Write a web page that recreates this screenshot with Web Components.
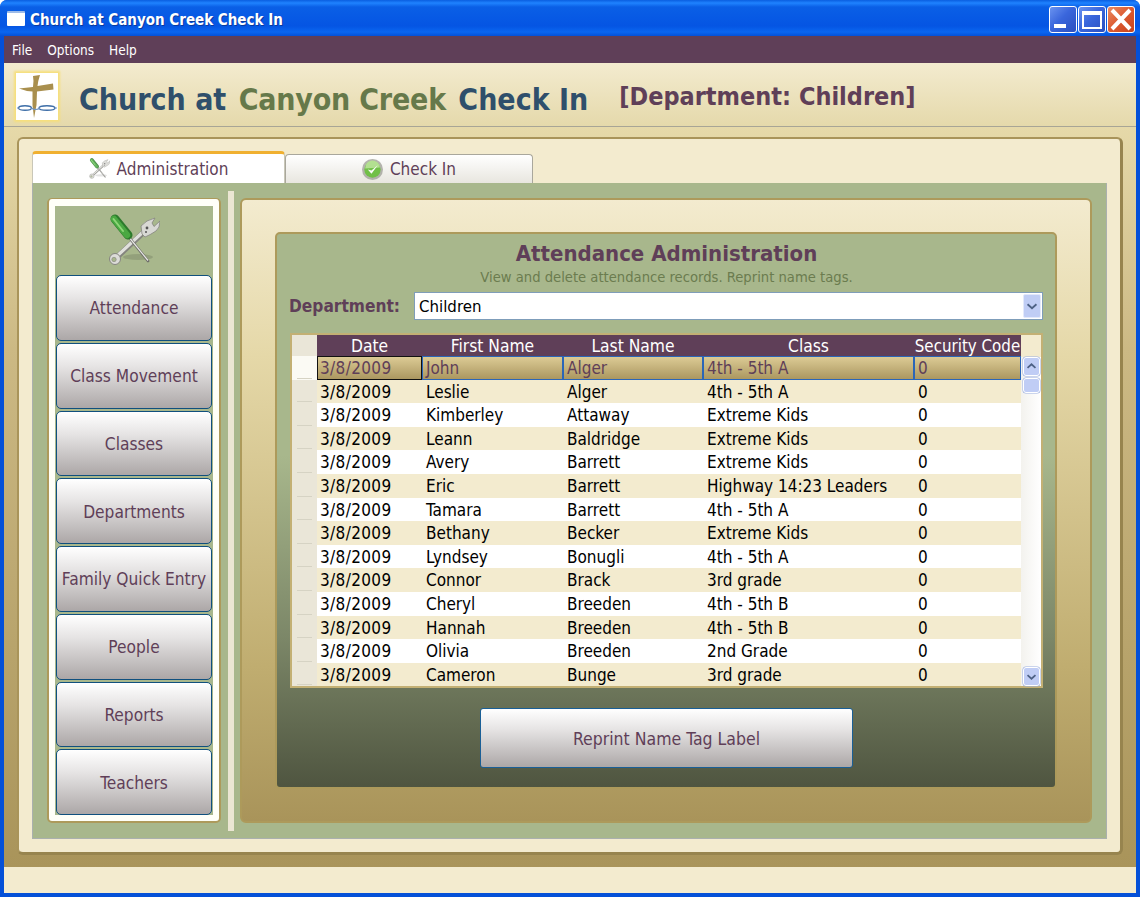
<!DOCTYPE html>
<html>
<head>
<meta charset="utf-8">
<title>Church at Canyon Creek Check In</title>
<style>
html, body { margin: 0; padding: 0; height: 100%; overflow: hidden; }
body { font-family: "DejaVu Sans", "Liberation Sans", sans-serif; font-stretch: condensed; }
</style>
</head>
<body>
<app-window></app-window>
<script>
// Barre de titre facon Windows XP
class TitleBar extends HTMLElement {
    connectedCallback() {
        this.attachShadow({ mode: 'open' });
        this.shadowRoot.innerHTML = `
            <style>
                :host {
                    display: flex;
                    flex: none;
                    align-items: center;
                    height: 36px;
                    padding: 0 5px 0 7px;
                    box-sizing: border-box;
                    color: #fff;
                    background: linear-gradient(#0a5ee0 0, #1f83ff 3px, #0a5fe6 7px, #0555e3 26px, #0a66f0 32px, #0450d8 36px);
                    border-radius: 7px 7px 0 0;
                    font-size: 15px;
                    font-weight: bold;
                    text-shadow: 1px 1px 0 #0a3a9e;
                }
                .icon { width: 18px; height: 15px; margin: 1px 5px 0 0; background: #fff; border-top: 2px solid #9dbbe8; box-sizing: border-box; border-radius: 1px; }
                .text { flex: 1; margin-top: 4px; }
                .btns { display: flex; gap: 1px; margin-top: 2px; }
                .btn { width: 28px; height: 27px; box-sizing: border-box; border: 1px solid #fff; border-radius: 3px; background: linear-gradient(135deg, #6a93f0, #3a66dc 45%, #2a4fc0); display: flex; }
                .close { background: linear-gradient(135deg, #ea8a62, #dc5a30 50%, #c8431c); }
                svg { width: 100%; height: 100%; }
            </style>
            <div class="icon"></div>
            <div class="text"><slot></slot></div>
            <div class="btns">
                <div class="btn"><svg viewBox="0 0 26 25"><rect x="4" y="17" width="12" height="4" fill="#fff"/></svg></div>
                <div class="btn"><svg viewBox="0 0 26 25"><path d="M3 4h20v18H3z M5 8v12h16V8z" fill="#fff" fill-rule="evenodd"/></svg></div>
                <div class="btn close"><svg viewBox="0 0 26 25"><path d="M4 3l18 19M22 3L4 22" stroke="#fff" stroke-width="4" fill="none"/></svg></div>
            </div>
        `;
    }
}
customElements.define('title-bar', TitleBar);

class MenuBar extends HTMLElement {
    connectedCallback() {
        this.attachShadow({ mode: 'open' });
        this.shadowRoot.innerHTML = `
            <style>
                :host {
                    display: flex;
                    flex: none;
                    align-items: center;
                    gap: 15px;
                    height: 27px;
                    box-sizing: border-box;
                    padding: 1px 8px 0;
                    background: #5f3f58;
                    color: #fff;
                    font-size: 13.5px;
                }
            </style>
            <span>File</span><span>Options</span><span>Help</span>
        `;
    }
}
customElements.define('menu-bar', MenuBar);

class AppHeader extends HTMLElement {
    connectedCallback() {
        this.attachShadow({ mode: 'open' });
        this.shadowRoot.innerHTML = `
            <style>
                :host {
                    display: flex;
                    flex: none;
                    align-items: center;
                    height: 64px;
                    box-sizing: border-box;
                    padding: 0 0 0 12px;
                    background: linear-gradient(#f3ebcf, #e5d9ab);
                    border-bottom: 1px solid #a8a596;
                }
                .logo { width: 42px; height: 47px; background: #fff; box-shadow: 0 0 2px 2px #f6df7c; margin: 3px 21px 0 0; flex: none; }
                .logo svg { display: block; width: 100%; height: 100%; }
                h1 { margin: 10px 0 0; font-size: 30px; font-weight: bold; color: #2f4f6b; white-space: nowrap; }
                h1 em { font-style: normal; color: #66794a; margin: 0 3px; letter-spacing: -.2px; }
                h2 { margin: 4px 0 0 31px; font-size: 25px; font-weight: bold; color: #5f3f58; white-space: nowrap; }
            </style>
            <div class="logo">
                <svg viewBox="0 0 42 47">
                    <path d="M17 3L24 2Q22 8 21.5 13L37 10.5 37.5 16.5 21 18.5 20.5 32 18 45 16.5 32 16.5 18.5Q9 18 3 15.5 10 14.5 17 14 18 8 17 3Z" fill="#a98f4e"/>
                    <ellipse cx="9" cy="35" rx="6.5" ry="2.3" stroke="#3f6fa8" stroke-width="1.4" fill="none"/>
                    <ellipse cx="31" cy="35" rx="8" ry="2.3" stroke="#3f6fa8" stroke-width="1.4" fill="none"/>
                    <path d="M15 35q5 3 9 0M1 35h2M39 35h2" stroke="#6f94c4" stroke-width="1.2" fill="none"/>
                </svg>
            </div>
            <h1>Church at <em>Canyon Creek</em> Check In</h1>
            <h2>[Department: Children]</h2>
        `;
    }
}
customElements.define('app-header', AppHeader);

// Icone outils, reprise a deux tailles (onglet et menu lateral)
const toolsIcon = `
    <svg viewBox="0 0 52 52" width="100%" height="100%">
        <ellipse cx="30" cy="43" rx="15" ry="3" fill="#000" opacity=".12"/>
        <path d="M8 44L36 18" stroke="#84847e" stroke-width="5.5" stroke-linecap="round"/>
        <path d="M8 43L36 17" stroke="#e0e0dc" stroke-width="3.2" stroke-linecap="round"/>
        <circle cx="7" cy="45" r="5.5" fill="#dcdcd8" stroke="#85857f" stroke-width="1"/>
        <circle cx="6" cy="45.5" r="2.2" fill="#a8b78c" stroke="#85857f" stroke-width=".6"/>
        <path d="M34 20L33 12Q38 6 47 4L44 9 46 12.5 52 7Q52 14 48 17 42 21 37 23Z" fill="#d8d8d4" stroke="#85857f" stroke-width=".8"/>
        <circle cx="39" cy="14" r="1.4" fill="#555"/>
        <circle cx="38" cy="18" r="1" fill="#555"/>
        <path d="M20 22L40 47" stroke="#6f6f6a" stroke-width="2.8" stroke-linecap="round"/>
        <path d="M20 22L40 46.5" stroke="#e8e8e4" stroke-width="1.2"/>
        <path d="M7 5L20 21" stroke="#2d7a2c" stroke-width="9" stroke-linecap="round"/>
        <path d="M6 5L19 21" stroke="#4aa842" stroke-width="6.5" stroke-linecap="round"/>
        <path d="M5.5 5L15 17" stroke="#8ed678" stroke-width="2" stroke-linecap="round"/>
    </svg>`;

class TabStrip extends HTMLElement {
    connectedCallback() {
        this.attachShadow({ mode: 'open' });
        this.shadowRoot.innerHTML = `
            <style>
                :host { display: flex; flex: none; align-items: flex-end; height: 32px; font-size: 17px; color: #5f3f58; }
                .tab { display: flex; align-items: center; justify-content: center; box-sizing: border-box; }
                .active { width: 253px; height: 32px; background: #fff; border: 1px solid #c9c7b8; border-top: 3px solid #f0b030; border-bottom: 0; border-radius: 4px 4px 0 0; }
                .other { width: 248px; height: 29px; background: linear-gradient(#fff, #e8e6df); border: 1px solid #a9a79c; border-bottom: 0; border-radius: 4px 4px 0 0; }
                .i { width: 21px; height: 21px; margin-right: 7px; opacity: .85; }
            </style>
            <div class="tab active"><span class="i">${toolsIcon}</span>Administration</div>
            <div class="tab other">
                <span class="i">
                    <svg viewBox="0 0 20 20" width="100%" height="100%">
                        <circle cx="10" cy="10" r="10" fill="#a8a8a0"/>
                        <circle cx="10" cy="10" r="7.8" fill="#5cb82c"/>
                        <path d="M3 9a7 7 0 0 1 14-1z" fill="#a8dc80"/>
                        <path d="M5.5 10l3.5 4 6-8-6 5z" fill="#fff"/>
                    </svg>
                </span>Check In
            </div>
        `;
    }
}
customElements.define('tab-strip', TabStrip);

class NavButton extends HTMLElement {
    connectedCallback() {
        this.attachShadow({ mode: 'open' });
        this.shadowRoot.innerHTML = `
            <style>
                :host {
                    display: flex;
                    flex: none;
                    align-items: center;
                    justify-content: center;
                    height: 65.75px;
                    box-sizing: border-box;
                    padding-top: 1px;
                    border: 1px solid #10507e;
                    border-radius: 5px;
                    background: linear-gradient(#fff, #e6e4e4 35%, #aca7a7);
                    color: #5f3f58;
                    font-size: 17.2px;
                    white-space: nowrap;
                }
            </style>
            <slot></slot>
        `;
    }
}
customElements.define('nav-button', NavButton);

class SideNav extends HTMLElement {
    connectedCallback() {
        this.attachShadow({ mode: 'open' });
        this.shadowRoot.innerHTML = `
            <style>
                :host {
                    display: block;
                    flex: none;
                    width: 174px;
                    box-sizing: border-box;
                    border: 2px solid #ad9a5b;
                    border-top-width: 1px;
                    border-radius: 5px;
                    background: #fffff8;
                    padding: 7px 6px 6px;
                }
                .inner { display: flex; flex-direction: column; gap: 2px; height: 100%; background: #a8b78c; padding: 0 1px; box-sizing: border-box; }
                .icon { height: 67px; flex: none; display: flex; justify-content: center; align-items: center; }
                .icon span { width: 52px; height: 52px; display: block; }
            </style>
            <div class="inner">
                <div class="icon"><span>${toolsIcon}</span></div>
                <slot></slot>
            </div>
        `;
    }
}
customElements.define('side-nav', SideNav);

const records = [
    ['John', 'Alger', '4th - 5th A'],
    ['Leslie', 'Alger', '4th - 5th A'],
    ['Kimberley', 'Attaway', 'Extreme Kids'],
    ['Leann', 'Baldridge', 'Extreme Kids'],
    ['Avery', 'Barrett', 'Extreme Kids'],
    ['Eric', 'Barrett', 'Highway 14:23 Leaders'],
    ['Tamara', 'Barrett', '4th - 5th A'],
    ['Bethany', 'Becker', 'Extreme Kids'],
    ['Lyndsey', 'Bonugli', '4th - 5th A'],
    ['Connor', 'Brack', '3rd grade'],
    ['Cheryl', 'Breeden', '4th - 5th B'],
    ['Hannah', 'Breeden', '4th - 5th B'],
    ['Olivia', 'Breeden', '2nd Grade'],
    ['Cameron', 'Bunge', '3rd grade']
];

class AttendanceGrid extends HTMLElement {
    connectedCallback() {
        this.attachShadow({ mode: 'open' });
        const rows = records.map((r, i) => `
            <div class="rh ${i === 0 ? 'sel' : ''}"></div>
            <div class="c first ${i === 0 ? 'cur' : ''} ${i % 2 ? 'alt' : ''}">3/8/2009</div>
            <div class="c ${i === 0 ? 'cur' : ''} ${i % 2 ? 'alt' : ''}">${r[0]}</div>
            <div class="c ${i === 0 ? 'cur' : ''} ${i % 2 ? 'alt' : ''}">${r[1]}</div>
            <div class="c ${i === 0 ? 'cur' : ''} ${i % 2 ? 'alt' : ''}">${r[2]}</div>
            <div class="c ${i === 0 ? 'cur' : ''} ${i % 2 ? 'alt' : ''}">0</div>
        `).join('');
        this.shadowRoot.innerHTML = `
            <style>
                :host {
                    display: flex;
                    height: 355px;
                    box-sizing: border-box;
                    border: 2px solid #c3b074;
                    background: #f3ebcf;
                    font-size: 17px;
                    color: #000;
                }
                .table {
                    display: grid;
                    flex: none;
                    grid-template-columns: 25px 105px 141px 140px 211px 107px;
                    grid-template-rows: 21px repeat(14, 23.6px);
                    width: 729px;
                    overflow: hidden;
                }
                .hc { background: #5f3f58; color: #fff; text-align: center; line-height: 23px; height: 21px; font-size: 17.3px; white-space: nowrap; overflow: hidden; }
                .hc.last { font-size: 16.8px; }
                .corner { background: #eae6d8; }
                .rh { background: #eae6d8; position: relative; }
                .rh::after { content: ""; position: absolute; left: 5px; right: 5px; bottom: 1px; height: 1px; background: #d6d3c4; }
                .rh.sel { background: #fbfaf4; }
                .c { background: #fff; padding: 0 0 0 4px; line-height: 25px; white-space: nowrap; overflow: hidden; box-sizing: border-box; }
                .c.alt { background: #f3ebcf; }
                .c.first { padding-left: 3px; letter-spacing: .35px; }
                .c.cur { background: linear-gradient(#dccb95, #ab9760); color: #5f3f58; border: 1px solid #2b66b8; line-height: 23px; padding-left: 3px; }
                .c.cur.first { border-color: #111; padding-left: 2px; }
                .scroll { width: 20px; flex: none; display: flex; flex-direction: column; background: linear-gradient(90deg, #f3f2ee, #fff); }
                .scroll .top { height: 22px; background: #f3ebcf; }
                .track { flex: 1; }
                .sb { display: block; width: 17px; height: 19px; margin-left: 2px; box-sizing: border-box; border: 1px solid #fff; border-radius: 3px; background: #c0cdf5; box-shadow: 0 0 0 .5px #9cb0e0; }
                .thumb { height: 15px; margin-top: 2px; }
                svg { display: block; width: 100%; height: 100%; }
            </style>
            <div class="table">
                <div class="hc corner"></div>
                <div class="hc">Date</div>
                <div class="hc">First Name</div>
                <div class="hc">Last Name</div>
                <div class="hc">Class</div>
                <div class="hc last">Security Code</div>
                ${rows}
            </div>
            <div class="scroll">
                <div class="top"></div>
                <div class="sb"><svg viewBox="0 0 17 19"><path d="M4 11l4.5-4 4.5 4" stroke="#4d6185" stroke-width="2" fill="none"/></svg></div>
                <div class="sb thumb"></div>
                <div class="track"></div>
                <div class="sb"><svg viewBox="0 0 17 19"><path d="M4 8l4.5 4 4.5-4" stroke="#4d6185" stroke-width="2" fill="none"/></svg></div>
            </div>
        `;
    }
}
customElements.define('attendance-grid', AttendanceGrid);

class AttendancePanel extends HTMLElement {
    connectedCallback() {
        this.attachShadow({ mode: 'open' });
        this.shadowRoot.innerHTML = `
            <style>
                :host {
                    display: block;
                    height: 557px;
                    box-sizing: border-box;
                    border: 2px solid #ad9a5b;
                    border-radius: 5px;
                    padding: 7px 12px 0 13px;
                    background: linear-gradient(#a8b78c, #a8b78c 40%, #7c8768 73%, #4f5540);
                }
                h3 { margin: 0; text-align: center; font-size: 22px; line-height: 26px; color: #5f3f58; }
                p { margin: 2px 0 0; text-align: center; font-size: 14.65px; line-height: 16px; color: #6b7c4f; }
                .dept { display: flex; align-items: center; height: 28px; margin: 7px 0 13px; }
                label { width: 125px; flex: none; margin-left: -1px; font-weight: bold; font-size: 17.2px; color: #5f3f58; white-space: nowrap; }
                .combo { flex: 1; height: 28px; box-sizing: border-box; border: 1px solid #7f9db9; background: #fff; display: flex; align-items: center; justify-content: space-between; padding: 0 1px 0 4px; font-size: 16.7px; color: #000; }
                .arrow { width: 18px; height: 24px; background: #c0cdf5; border-radius: 2px; box-sizing: border-box; border: 1px solid #e3e9fb; }
                .arrow svg { display: block; width: 100%; height: 100%; }
                .actions { display: flex; justify-content: center; margin-top: 20px; }
                .reprint { width: 373px; height: 60px; box-sizing: border-box; padding-top: 2px; border: 1px solid #1a5f96; border-radius: 3px; display: flex; align-items: center; justify-content: center; background: linear-gradient(#fff, #e6e4e4 35%, #aca7a7); color: #5f3f58; font-size: 17.5px; }
            </style>
            <h3>Attendance Administration</h3>
            <p>View and delete attendance records. Reprint name tags.</p>
            <div class="dept">
                <label>Department:</label>
                <div class="combo">Children
                    <div class="arrow"><svg viewBox="0 0 18 24"><path d="M4 10l5 4.5 5-4.5" stroke="#4d6185" stroke-width="2" fill="none"/></svg></div>
                </div>
            </div>
            <attendance-grid></attendance-grid>
            <div class="actions"><div class="reprint">Reprint Name Tag Label</div></div>
        `;
    }
}
customElements.define('attendance-panel', AttendancePanel);

class AppWindow extends HTMLElement {
    connectedCallback() {
        this.attachShadow({ mode: 'open' });
        this.shadowRoot.innerHTML = `
            <style>
                :host {
                    display: flex;
                    flex-direction: column;
                    width: 1140px;
                    height: 897px;
                    box-sizing: border-box;
                    background: #0450d8;
                    border-radius: 7px 7px 0 0;
                }
                .client { flex: 1; display: flex; flex-direction: column; margin: 0 4px 4px; min-height: 0; }
                .body {
                    flex: 1;
                    min-height: 0;
                    padding: 10px 13px 12px;
                    background: linear-gradient(#e6d9a9, #ccb984 30%, #a9945a);
                    display: flex;
                    flex-direction: column;
                }
                .status { height: 26px; flex: none; background: #f3ebcf; }
                .card { flex: 1; min-height: 0; display: flex; flex-direction: column; box-sizing: border-box; border: 2px solid #a9945a; border-right: 3px solid #97844e; border-bottom: 3px solid #97844e; border-radius: 6px; background: #f3ebcf; padding: 12px 13px 13px; }
                .page { flex: 1; min-height: 0; display: flex; gap: 6px; box-sizing: border-box; background: #a8b78c; border: 1px solid #aab0ae; border-top: 0; padding: 15px 14px 15px 14px; }
                .split { width: 6px; flex: none; margin: -7px 0 -8px 1px; background: #ebe6d3; }
                .main { flex: 1; min-width: 0; box-sizing: border-box; padding: 32px 33px 0; border: 2px solid #ad9a5b; border-radius: 6px; background: linear-gradient(#f3ebcf, #e5d8a8 25%, #c0ad70 75%, #a9945a); }
            </style>
            <title-bar>Church at Canyon Creek Check In</title-bar>
            <div class="client">
                <menu-bar></menu-bar>
                <app-header></app-header>
                <div class="body">
                    <div class="card">
                        <tab-strip></tab-strip>
                        <div class="page">
                            <side-nav>
                                <nav-button>Attendance</nav-button>
                                <nav-button>Class Movement</nav-button>
                                <nav-button>Classes</nav-button>
                                <nav-button>Departments</nav-button>
                                <nav-button>Family Quick Entry</nav-button>
                                <nav-button>People</nav-button>
                                <nav-button>Reports</nav-button>
                                <nav-button>Teachers</nav-button>
                            </side-nav>
                            <div class="split"></div>
                            <div class="main"><attendance-panel></attendance-panel></div>
                        </div>
                    </div>
                </div>
                <div class="status"></div>
            </div>
        `;
    }
}
customElements.define('app-window', AppWindow);
</script>
</body>
</html>
